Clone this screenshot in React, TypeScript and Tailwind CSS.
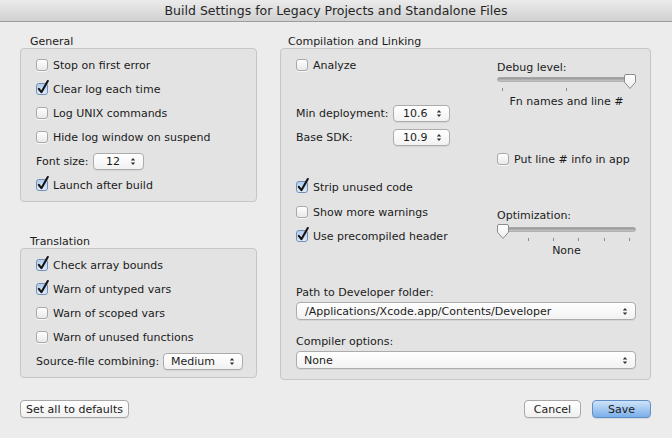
import React from "react";

function Check({ checked }: { checked?: boolean }) {
  return (
    <span className="relative inline-block h-[12px] w-[12px] shrink-0">
      {checked ? (
        <span className="absolute inset-0 rounded-[3px] border border-[#7190b8] bg-gradient-to-b from-[#b4cdec] to-[#e0ebf8]" />
      ) : (
        <span className="absolute inset-0 rounded-[3px] border border-[#a9a9a9] bg-gradient-to-b from-white to-[#e9e9e9] shadow-[0_1px_0_rgba(255,255,255,0.7)]" />
      )}
      {checked && (
        <svg className="absolute left-[0px] top-[-4px]" width="14" height="16" viewBox="0 0 14 16">
          <path d="M2.8 9.8 L5.4 13.2 L11.8 2" fill="none" stroke="#151515" strokeWidth="2.1" strokeLinecap="round" strokeLinejoin="round" />
        </svg>
      )}
    </span>
  );
}

function CheckRow({ label, checked, className = "" }: { label: string; checked?: boolean; className?: string }) {
  return (
    <div className={"flex h-[24px] items-center gap-[5px] " + className}>
      <Check checked={checked} />
      <span className="pt-[1px]">{label}</span>
    </div>
  );
}

function Arrows() {
  return (
    <svg width="6" height="9" viewBox="0 0 6 9" className="shrink-0">
      <path d="M0.8 3.4 L3 1 L5.2 3.4 Z" fill="#333" />
      <path d="M0.8 5.6 L3 8 L5.2 5.6 Z" fill="#333" />
    </svg>
  );
}

function Popup({ value, className = "" }: { value: string; className?: string }) {
  return (
    <div
      className={
        "flex items-center justify-between rounded-[4px] border border-[#acacac] bg-gradient-to-b from-white to-[#f2f2f2] pr-[7px] shadow-[0_1px_0_rgba(0,0,0,0.06)] " +
        className
      }
    >
      <span className="pt-[1px]">{value}</span>
      <Arrows />
    </div>
  );
}

function Thumb({ x }: { x: number }) {
  return (
    <path
      transform={`translate(${x} 0)`}
      d="M2 0.5 H10 Q11.5 0.5 11.5 2 V8.2 L6 14.5 L0.5 8.2 V2 Q0.5 0.5 2 0.5 Z"
      fill="url(#thumbg)"
      stroke="#8c8c8c"
      strokeWidth="1"
    />
  );
}

function Slider({ thumbX, ticks }: { thumbX: number; ticks: number[] }) {
  return (
    <svg width="139" height="19" viewBox="0 0 139 19" className="block">
      <defs>
        <linearGradient id="trackg" x1="0" y1="0" x2="0" y2="1">
          <stop offset="0" stopColor="#8f8f8f" />
          <stop offset="1" stopColor="#cdcdcd" />
        </linearGradient>
        <linearGradient id="thumbg" x1="0" y1="0" x2="0" y2="1">
          <stop offset="0" stopColor="#ffffff" />
          <stop offset="1" stopColor="#ececec" />
        </linearGradient>
      </defs>
      <rect x="0.5" y="3.5" width="138" height="4" rx="2" fill="url(#trackg)" stroke="#999" strokeWidth="0.6" />
      {ticks.map((t) => (
        <rect key={t} x={t} y="14" width="1" height="3" fill="#8a8a8a" />
      ))}
      <Thumb x={thumbX} />
    </svg>
  );
}

function Button({ label, className = "" }: { label: string; className?: string }) {
  return (
    <div
      className={
        "flex h-[18px] items-center justify-center rounded-[4px] border border-[#a8a8a8] bg-gradient-to-b from-white to-[#f0f0f0] pt-[1px] shadow-[0_1px_0_rgba(0,0,0,0.06)] " +
        className
      }
    >
      {label}
    </div>
  );
}

export default function App() {
  return (
    <div className="flex h-[438px] w-[672px] flex-col overflow-hidden bg-[#ececec] font-['DejaVu_Sans',sans-serif] text-[11px] leading-[14px] text-[#1b1b1b]">
      <div className="flex h-[22px] shrink-0 items-center justify-center border-b border-[#9e9e9e] bg-gradient-to-b from-[#ebebeb] to-[#d1d1d1] text-[12.5px] text-[#262626]">
        Build Settings for Legacy Projects and Standalone Files
      </div>

      <div className="flex gap-[23px] px-[20px] pt-[12px]">
        <div className="flex w-[237px] flex-col">
          <div className="h-[14px] pl-[10px] pt-[1px]">General</div>
          <div className="rounded-[4px] border border-[#c6c6c6] bg-[#e3e3e3] pb-[4px] pl-[15px] pt-[4px]">
            <CheckRow label="Stop on first error" />
            <CheckRow label="Clear log each time" checked />
            <CheckRow label="Log UNIX commands" />
            <CheckRow label="Hide log window on suspend" />
            <div className="flex h-[24px] items-center">
              <span className="w-[57px] pt-[1px]">Font size:</span>
              <Popup value="12" className="h-[17px] w-[51px] pl-[12px]" />
            </div>
            <CheckRow label="Launch after build" checked />
          </div>

          <div className="mt-[32px] h-[14px] pl-[10px] pt-[1px]">Translation</div>
          <div className="rounded-[4px] border border-[#c6c6c6] bg-[#e3e3e3] pb-[4px] pl-[15px] pt-[4px]">
            <CheckRow label="Check array bounds" checked />
            <CheckRow label="Warn of untyped vars" checked />
            <CheckRow label="Warn of scoped vars" />
            <CheckRow label="Warn of unused functions" />
            <div className="flex h-[24px] items-center">
              <span className="w-[127px] pt-[1px]">Source-file combining:</span>
              <Popup value="Medium" className="h-[17px] w-[80px] pl-[7px]" />
            </div>
          </div>
        </div>

        <div className="flex w-[371px] flex-col">
          <div className="h-[14px] pl-[8px] pt-[1px]">Compilation and Linking</div>
          <div className="flex flex-col rounded-[4px] border border-[#c6c6c6] bg-[#e3e3e3] pb-[10px] pl-[15px] pr-[14px] pt-[4px]">
            <div className="flex">
              <div className="flex w-[201px] flex-col">
                <CheckRow label="Analyze" />
                <div className="mt-[24px] flex h-[24px] items-center">
                  <span className="w-[97px] pt-[1px]">Min deployment:</span>
                  <Popup value="10.6" className="h-[17px] w-[57px] pl-[9px]" />
                </div>
                <div className="flex h-[24px] items-center">
                  <span className="w-[97px] pt-[1px]">Base SDK:</span>
                  <Popup value="10.9" className="h-[17px] w-[57px] pl-[9px]" />
                </div>
                <CheckRow label="Strip unused code" checked className="mt-[26px]" />
                <CheckRow label="Show more warnings" className="mt-[1px]" />
                <CheckRow label="Use precompiled header" checked />
              </div>
              <div className="flex w-[139px] flex-col">
                <div className="mt-[7px] h-[14px] pt-[1px]">Debug level:</div>
                <Slider thumbX={127} ticks={[5, 69]} />
                <div className="mt-[1px] h-[14px] pt-[1px] text-center">Fn names and line #</div>
                <CheckRow label="Put line # info in app" className="mt-[39px]" />
                <div className="mt-[37px] h-[14px] pt-[1px]">Optimization:</div>
                <div className="mt-[2px]">
                  <Slider thumbX={0} ticks={[31, 56, 81, 107, 132]} />
                </div>
                <div className="h-[14px] pt-[1px] text-center">None</div>
              </div>
            </div>
            <div className="mt-[28px] h-[14px] pt-[1px]">Path to Developer folder:</div>
            <Popup value="/Applications/Xcode.app/Contents/Developer" className="mt-[3px] h-[18px] w-full pl-[8px]" />
            <div className="mt-[14px] h-[14px] pt-[1px]">Compiler options:</div>
            <Popup value="None" className="mt-[3px] h-[18px] w-full pl-[7px]" />
          </div>
        </div>
      </div>

      <div className="mt-[20px] flex items-center justify-between pl-[20px] pr-[21px]">
        <Button label="Set all to defaults" className="w-[109px]" />
        <div className="flex gap-[11px]">
          <Button label="Cancel" className="w-[57px]" />
          <div className="flex h-[18px] w-[59px] items-center justify-center rounded-[4px] border border-[#5f8fca] bg-gradient-to-b from-[#cfe3f9] via-[#a5c9f1] to-[#78aee9] pt-[1px] shadow-[0_1px_0_rgba(0,0,0,0.08)]">
            Save
          </div>
        </div>
      </div>
    </div>
  );
}
